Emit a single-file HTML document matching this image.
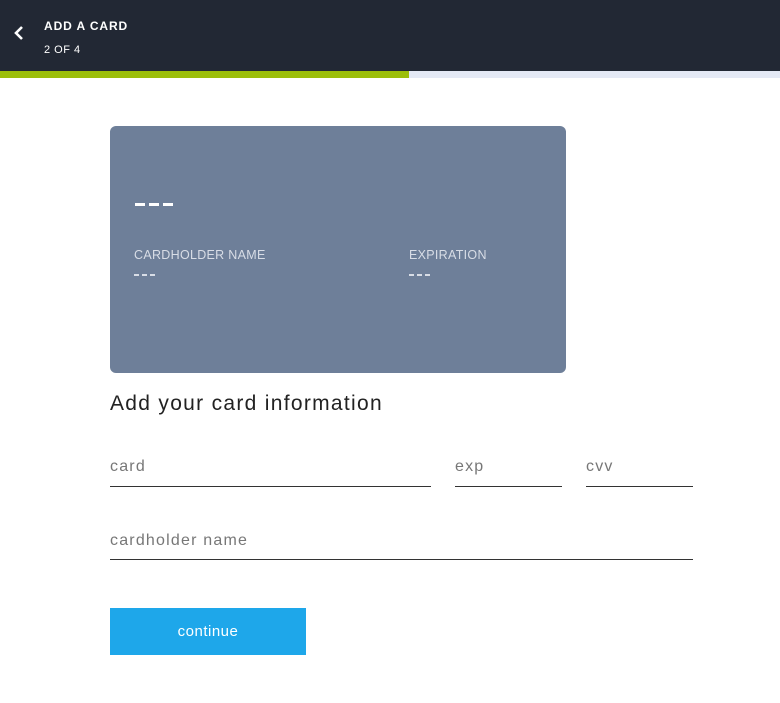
<!DOCTYPE html>
<html><head><style>
body{margin:0;width:780px;height:703px;background:#fff;font-family:"Liberation Sans",sans-serif;position:relative;overflow:hidden}
.hdr{position:absolute;left:0;top:0;width:780px;height:71px;background:#222834}
.bar{position:absolute;top:71px;height:7px}
.t{position:absolute;color:#fff}
.card{position:absolute;left:110px;top:126px;width:456px;height:247px;background:#6e7f99;border-radius:6px}
.lbl{position:absolute;font-size:12.5px;color:#d8dde6;letter-spacing:.3px}
.line{position:absolute;height:1px;background:#333}
.ph{position:absolute;font-size:16px;color:#777;letter-spacing:1.2px}
.dash{position:absolute;display:flex;gap:4px}
.dash i{display:block;background:#fff}
</style></head><body>
<div class="hdr"></div>
<svg style="position:absolute;left:13px;top:25px" width="12" height="16"><path d="M9 2 L3 8 L9 14" stroke="#fff" stroke-width="2.6" fill="none"/></svg>
<div class="t" style="left:44px;top:19px;font-size:12px;font-weight:bold;letter-spacing:.9px">ADD A CARD</div>
<div class="t" style="left:44px;top:44px;font-size:11px;letter-spacing:.5px">2 OF 4</div>
<div class="bar" style="left:0;width:409px;background:#9cbf0b"></div>
<div class="bar" style="left:409px;width:371px;background:#e4e9f5"></div>
<div class="card">
<div class="dash" style="left:25px;top:77px"><i style="width:10px;height:3px"></i><i style="width:10px;height:3px"></i><i style="width:10px;height:3px"></i></div>
<div class="lbl" style="left:24px;top:122px">CARDHOLDER NAME</div>
<div class="lbl" style="left:299px;top:122px">EXPIRATION</div>
<div class="dash" style="left:24px;top:148px;gap:3px"><i style="width:5px;height:2px;background:#d8dde6"></i><i style="width:5px;height:2px;background:#d8dde6"></i><i style="width:5px;height:2px;background:#d8dde6"></i></div>
<div class="dash" style="left:299px;top:148px;gap:3px"><i style="width:5px;height:2px;background:#d8dde6"></i><i style="width:5px;height:2px;background:#d8dde6"></i><i style="width:5px;height:2px;background:#d8dde6"></i></div>
</div>
<div style="position:absolute;left:110px;top:392px;font-size:21px;color:#222;letter-spacing:1.3px">Add your card information</div>
<div class="ph" style="left:110px;top:458px">card</div>
<div class="line" style="left:110px;top:486px;width:321px"></div>
<div class="ph" style="left:455px;top:458px">exp</div>
<div class="line" style="left:455px;top:486px;width:107px"></div>
<div class="ph" style="left:586px;top:458px">cvv</div>
<div class="line" style="left:586px;top:486px;width:107px"></div>
<div class="ph" style="left:110px;top:532px">cardholder name</div>
<div class="line" style="left:110px;top:559px;width:583px"></div>
<div style="position:absolute;left:110px;top:608px;width:196px;height:47px;background:#1ea7ea;color:#fff;font-size:15px;text-align:center;line-height:47px;letter-spacing:.5px">continue</div>
</body></html>
